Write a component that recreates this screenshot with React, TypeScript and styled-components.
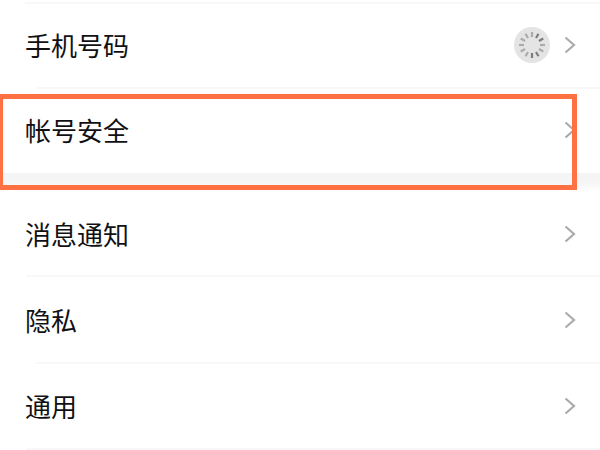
import React from "react";
import styled, { createGlobalStyle } from "styled-components";

const Global = createGlobalStyle`
  html, body { margin: 0; padding: 0; background: #fff; }
  body { width: 600px; height: 450px; overflow: hidden; }
`;

const Page = styled.div`
  position: relative;
  width: 600px;
  height: 450px;
  overflow: hidden;
  background: #fff;
  padding-top: 2px;
  box-sizing: border-box;
  font-family: "Noto Sans CJK SC", "Noto Sans", sans-serif;
`;

const Divider = styled.div<{ $inset: number }>`
  height: 2px;
  margin-left: ${(p) => p.$inset}px;
  background: #f8f8f8;
`;

const Row = styled.div<{ $h: number; $top?: number; $bottom?: number }>`
  display: flex;
  align-items: center;
  box-sizing: border-box;
  height: ${(p) => p.$h}px;
  padding: ${(p) => p.$top ?? 0}px 24px ${(p) => p.$bottom ?? 0}px 25px;
`;

const Label = styled.span`
  flex: 1;
  font-size: 26px;
  line-height: 32px;
  color: #111114;
`;

const Spinner = styled.div`
  width: 36px;
  height: 36px;
  margin-right: 14px;
  border-radius: 50%;
  background: #e4e4e4;
  display: flex;
  align-items: center;
  justify-content: center;
`;

const Chevron = styled.svg`
  width: 12px;
  height: 20px;
  flex: none;
`;

const Band = styled.div`
  height: 17px;
  background: linear-gradient(#f4f4f4, #f6f6f6 60%, #fbfbfb 88%, #fff);
`;

const Highlight = styled.div`
  position: absolute;
  left: -2px;
  top: 94px;
  width: 579px;
  height: 96px;
  box-sizing: border-box;
  border: 5px solid #ff7043;
`;

const Arrow = () => (
  <Chevron viewBox="0 0 12 20">
    <path d="M1.5 2.5 L10 10 L1.5 17.5" fill="none" stroke="#ababab" strokeWidth="2.2" />
  </Chevron>
);

const ticks = Array.from({ length: 12 }, (_, i) => i);
const darkTicks = [1, 2, 5, 6];

const SpinnerIcon = () => (
  <svg width="30" height="30" viewBox="-15 -15 30 30">
    {ticks.map((i) => (
      <line
        key={i}
        x1="0"
        y1="-8"
        x2="0"
        y2="-13"
        stroke={darkTicks.includes(i) ? "#7d7d7d" : "#ababab"}
        strokeWidth="2.2"
        transform={`rotate(${i * 30})`}
      />
    ))}
  </svg>
);

export default function App() {
  return (
    <Page>
      <Global />
      <Divider $inset={25} />
      <Row $h={83} $bottom={2}>
        <Label>手机号码</Label>
        <Spinner>
          <SpinnerIcon />
        </Spinner>
        <Arrow />
      </Row>
      <Divider $inset={36} />
      <Row $h={84} $bottom={2}>
        <Label>帐号安全</Label>
        <Arrow />
      </Row>
      <Band />
      <Row $h={85} $top={2}>
        <Label>消息通知</Label>
        <Arrow />
      </Row>
      <Divider $inset={26} />
      <Row $h={85}>
        <Label>隐私</Label>
        <Arrow />
      </Row>
      <Divider $inset={36} />
      <Row $h={84} $bottom={1}>
        <Label>通用</Label>
        <Arrow />
      </Row>
      <Divider $inset={26} />
      <Highlight />
    </Page>
  );
}
